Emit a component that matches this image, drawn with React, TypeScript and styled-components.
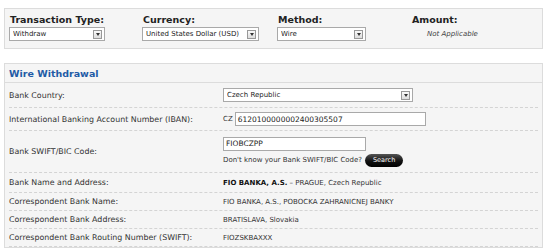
import React from 'react'
import styled, { createGlobalStyle } from 'styled-components'

const GlobalStyle = createGlobalStyle`
	body {
		margin: 0;
		background: #fff;
		font-family: 'DejaVu Sans', Verdana, sans-serif;
		color: #333;
	}
`

const Page = styled.div`
	padding: 8px 7px 0 4px;
	display: flex;
	flex-direction: column;
	gap: 14px;
`

const Panel = styled.div`
	background: #f5f5f5;
	border: 1px solid #dcdcdc;
`

const TopBar = styled(Panel)`
	padding: 4px 0 0 4px;
	box-sizing: border-box;
	height: 41px;
	display: grid;
	grid-template-columns: 133px 135px 134px 1fr;
`

const Field = styled.div`
	display: flex;
	flex-direction: column;
	gap: 1px;
`

const FieldLabel = styled.div`
	font-weight: bold;
	font-size: 9.5px;
	line-height: 13px;
	color: #222;
	padding-left: 1px;
`

const Select = styled.div<{ w: number }>`
	width: ${(p) => p.w}px;
	height: 14px;
	box-sizing: border-box;
	border: 1px solid #a9a9a9;
	background: #fff;
	display: flex;
	align-items: center;
	font-size: 7px;
	color: #222;
	padding-left: 3px;
`

const SelectText = styled.span`
	flex: 1;
	white-space: nowrap;
	overflow: hidden;
`

const Arrow = styled.span`
	width: 9px;
	height: 9px;
	margin-right: 2px;
	border: 1px solid #999;
	background: linear-gradient(#fafafa, #ddd);
	box-sizing: border-box;
	display: flex;
	align-items: center;
	justify-content: center;

	&::after {
		content: '';
		border-left: 2px solid transparent;
		border-right: 2px solid transparent;
		border-top: 3px solid #333;
	}
`

const NotApplicable = styled.div`
	font-style: italic;
	font-size: 7px;
	color: #444;
	padding: 3px 0 0 16px;
`

const Header = styled.div`
	height: 18px;
	display: flex;
	align-items: center;
	padding-left: 4px;
	border-bottom: 1px solid #dcdcdc;
	color: #1f5ba6;
	font-weight: bold;
	font-size: 9.5px;
`

const Rows = styled.div`
	padding: 0 4px;
	display: flex;
	flex-direction: column;
`

const Row = styled.div<{ h: number }>`
	height: ${(p) => p.h}px;
	box-sizing: border-box;
	display: grid;
	grid-template-columns: 214px 1fr;
	align-items: center;
	border-bottom: 1px dashed #d4d4d4;
	font-size: 7px;
	color: #333;
`

const Label = styled.div`
	font-size: 7.9px;
	white-space: nowrap;
`

const Value = styled.div`
	display: flex;
	flex-direction: column;
	gap: 3px;
	white-space: nowrap;
`

const Line = styled.div`
	display: flex;
	align-items: center;
	gap: 2px;
`

const TextInput = styled.div<{ w: number }>`
	width: ${(p) => p.w}px;
	height: 14px;
	box-sizing: border-box;
	border: 1px solid #a9a9a9;
	background: #fff;
	font-size: 7.5px;
	color: #222;
	display: flex;
	align-items: center;
	padding-left: 2px;
`

const SearchButton = styled.span`
	display: inline-flex;
	align-items: center;
	justify-content: center;
	width: 38px;
	height: 13px;
	border-radius: 7px;
	background: linear-gradient(#555, #111 55%, #000);
	color: #fff;
	font-size: 6.5px;
	margin-left: 1px;
`

const Strong = styled.b`
	font-weight: bold;
	color: #111;
`

export default function App() {
	return (
		<>
			<GlobalStyle />
			<Page>
				<TopBar>
					<Field>
						<FieldLabel>Transaction Type:</FieldLabel>
						<Select w={96}>
							<SelectText>Withdraw</SelectText>
							<Arrow />
						</Select>
					</Field>
					<Field>
						<FieldLabel>Currency:</FieldLabel>
						<Select w={117}>
							<SelectText>United States Dollar (USD)</SelectText>
							<Arrow />
						</Select>
					</Field>
					<Field>
						<FieldLabel>Method:</FieldLabel>
						<Select w={89}>
							<SelectText>Wire</SelectText>
							<Arrow />
						</Select>
					</Field>
					<Field>
						<FieldLabel>Amount:</FieldLabel>
						<NotApplicable>Not Applicable</NotApplicable>
					</Field>
				</TopBar>
				<Panel>
					<Header>Wire Withdrawal</Header>
					<Rows>
						<Row h={25}>
							<Label>Bank Country:</Label>
							<Value>
								<Select w={190}>
									<SelectText>Czech Republic</SelectText>
									<Arrow />
								</Select>
							</Value>
						</Row>
						<Row h={23}>
							<Label>International Banking Account Number (IBAN):</Label>
							<Value>
								<Line>
									<span>CZ</span>
									<TextInput w={191}>6120100000002400305507</TextInput>
								</Line>
							</Value>
						</Row>
						<Row h={42}>
							<Label>Bank SWIFT/BIC Code:</Label>
							<Value>
								<TextInput w={143}>FIOBCZPP</TextInput>
								<Line>
									<span>Don't know your Bank SWIFT/BIC Code?</span>
									<SearchButton>Search</SearchButton>
								</Line>
							</Value>
						</Row>
						<Row h={20}>
							<Label>Bank Name and Address:</Label>
							<Value>
								<span>
									<Strong>FIO BANKA, A.S.</Strong> – PRAGUE, Czech Republic
								</span>
							</Value>
						</Row>
						<Row h={18}>
							<Label>Correspondent Bank Name:</Label>
							<Value>FIO BANKA, A.S., POBOCKA ZAHRANICNEJ BANKY</Value>
						</Row>
						<Row h={18}>
							<Label>Correspondent Bank Address:</Label>
							<Value>BRATISLAVA, Slovakia</Value>
						</Row>
						<Row h={18}>
							<Label>Correspondent Bank Routing Number (SWIFT):</Label>
							<Value>FIOZSKBAXXX</Value>
						</Row>
					</Rows>
				</Panel>
			</Page>
		</>
	)
}
